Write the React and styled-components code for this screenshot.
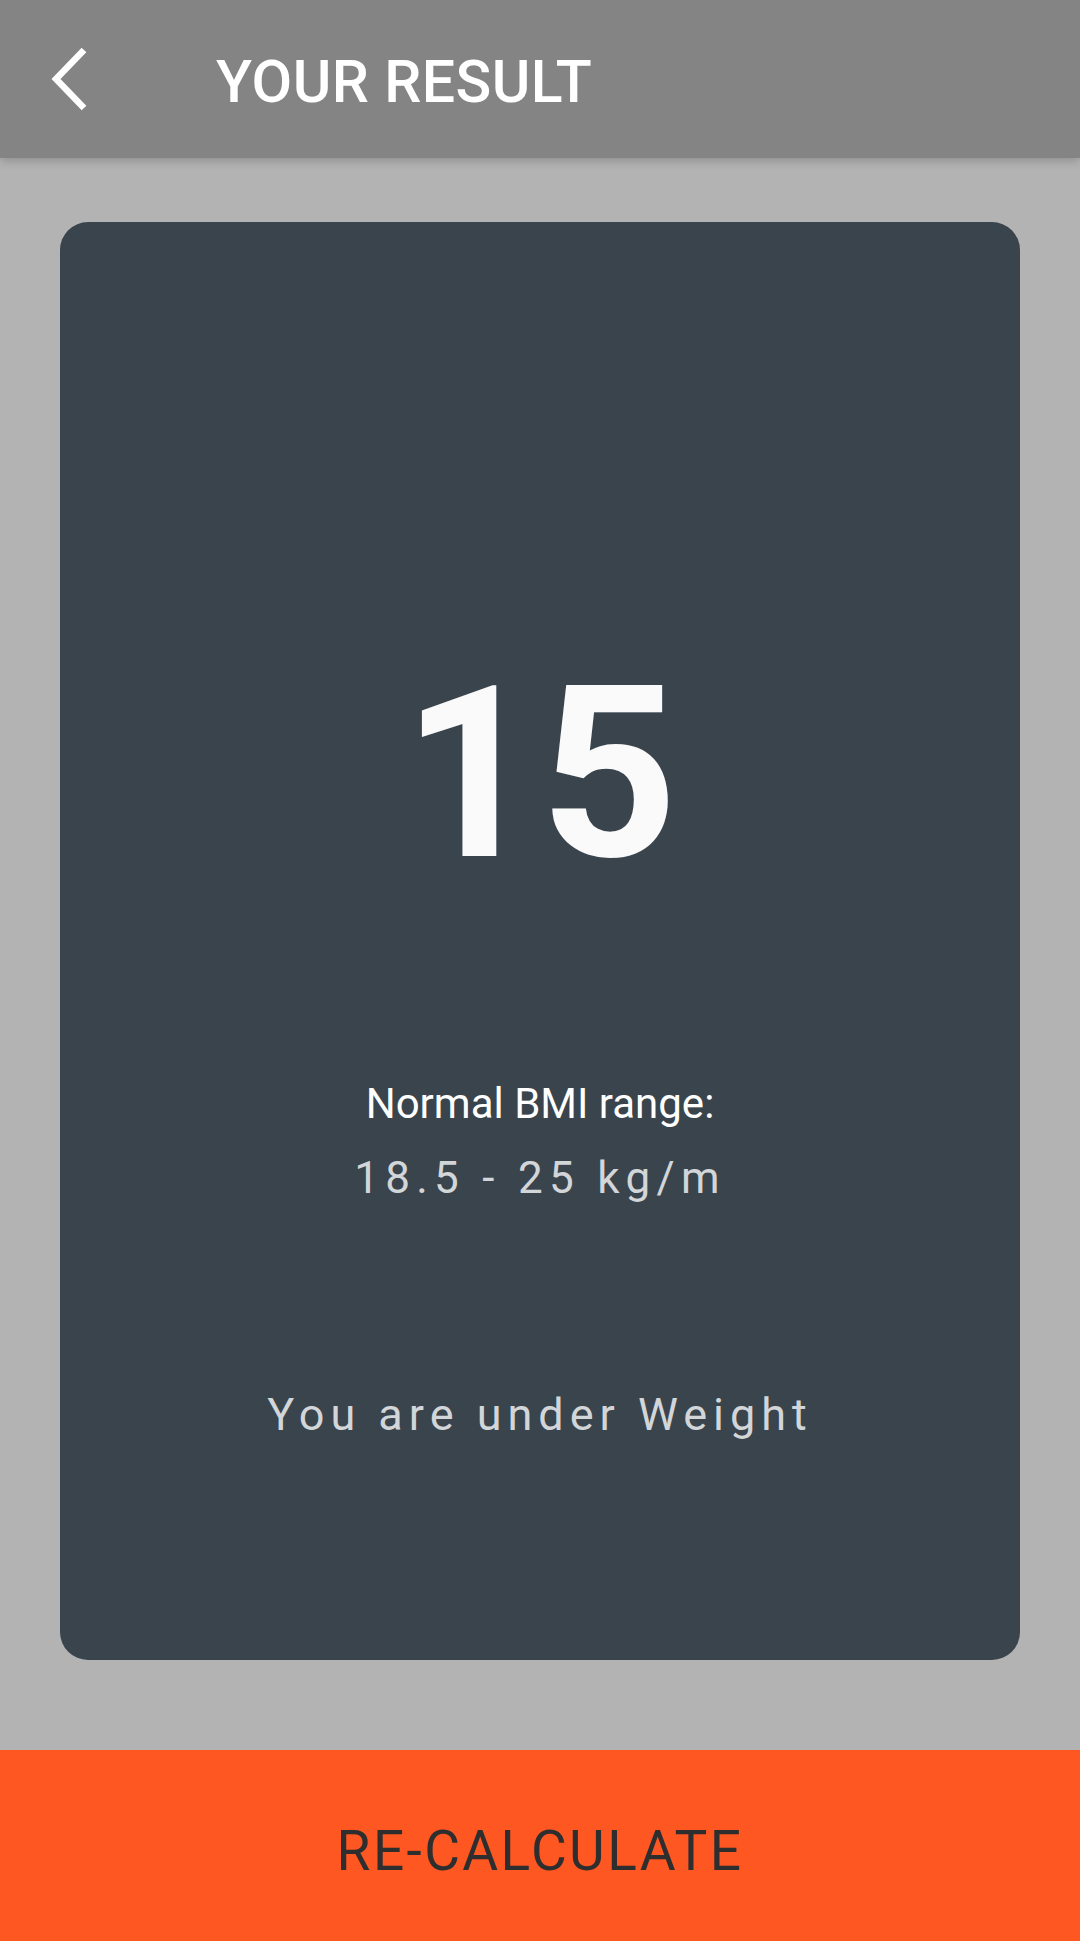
import React from "react";
import styled, { createGlobalStyle } from "styled-components";

const Global = createGlobalStyle`
  html, body { margin: 0; padding: 0; background: #b3b3b3; }
  body { font-family: Roboto, "Noto Sans", "Liberation Sans", sans-serif; }
  #root { min-height: 1941px; }
`;

const Screen = styled.div`
  width: 1080px;
  height: 1941px;
  display: flex;
  flex-direction: column;
  background: #b3b3b3;
  overflow: hidden;
`;

const AppBar = styled.header`
  height: 158px;
  flex: 0 0 158px;
  display: flex;
  align-items: center;
  background: #848484;
  box-shadow: 0 3px 9px rgba(0, 0, 0, 0.2);
  position: relative;
  z-index: 1;
`;

const BackButton = styled.button`
  width: 84px;
  height: 100px;
  margin-left: 28px;
  padding: 0;
  border: 0;
  background: transparent;
  display: flex;
  align-items: center;
  justify-content: center;
`;

const Title = styled.h1`
  margin: 4px 0 0 104px;
  font-size: 59px;
  line-height: 1;
  font-weight: 500;
  color: #ffffff;
  letter-spacing: 0.4px;
`;

const Body = styled.main`
  flex: 1;
  display: flex;
  flex-direction: column;
  padding: 64px 60px 0;
`;

const Card = styled.section`
  height: 1438px;
  background: #3a444d;
  border-radius: 28px;
  display: flex;
  flex-direction: column;
  align-items: center;
`;

const Score = styled.div`
  margin-top: 432px;
  font-size: 240px;
  line-height: 240px;
  font-weight: 700;
  color: #fafafa;
`;

const RangeLabel = styled.div`
  margin-top: 186px;
  font-size: 42px;
  line-height: 48px;
  color: #ffffff;
`;

const RangeValue = styled.div`
  margin-top: 24px;
  font-size: 44px;
  line-height: 52px;
  color: #d3d6d9;
  letter-spacing: 6.3px;
`;

const Verdict = styled.div`
  margin-top: 184px;
  font-size: 45px;
  line-height: 54px;
  color: #d3d6d9;
  letter-spacing: 6px;
`;

const Footer = styled.button`
  flex: 0 0 191px;
  height: 191px;
  margin-top: auto;
  border: 0;
  background: #ff5722;
  color: #2e2e2e;
  font-family: Roboto, "Noto Sans", "Liberation Sans", sans-serif;
  font-size: 55px;
  letter-spacing: 2.4px;
  display: flex;
  align-items: center;
  justify-content: center;
  padding: 10px 0 0;
`;

function Chevron() {
  return (
    <svg width="40" height="64" viewBox="0 0 40 64" aria-hidden="true">
      <polyline
        points="34,3 6,32 34,61"
        fill="none"
        stroke="#ffffff"
        strokeWidth="6.5"
        strokeLinecap="butt"
        strokeLinejoin="miter"
      />
    </svg>
  );
}

export default function App() {
  return (
    <>
      <Global />
      <Screen>
        <AppBar>
          <BackButton aria-label="Back">
            <Chevron />
          </BackButton>
          <Title>YOUR RESULT</Title>
        </AppBar>
        <Body>
          <Card>
            <Score>15</Score>
            <RangeLabel>Normal BMI range:</RangeLabel>
            <RangeValue>18.5 - 25 kg/m</RangeValue>
            <Verdict>You are under Weight</Verdict>
          </Card>
        </Body>
        <Footer>RE-CALCULATE</Footer>
      </Screen>
    </>
  );
}
